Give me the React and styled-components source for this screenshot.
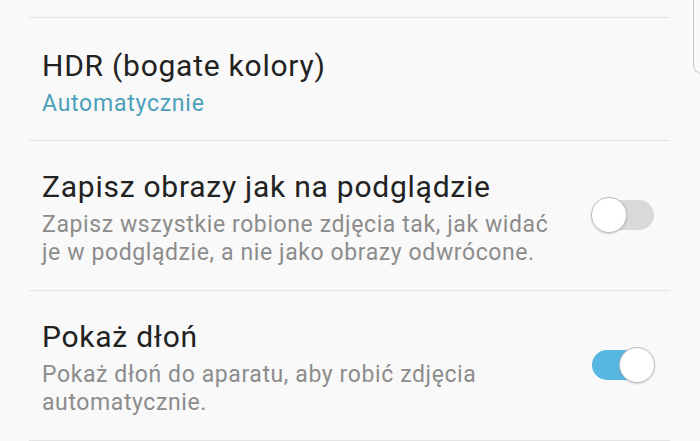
import styled, { createGlobalStyle } from "styled-components";

const GlobalStyle = createGlobalStyle`
  html, body {
    margin: 0;
    padding: 0;
    background: #f9f9f9;
  }
  body {
    font-family: Roboto, "Noto Sans", sans-serif;
    overflow: hidden;
  }
`;

const settings = [
  { title: "HDR (bogate kolory)", value: "Automatycznie" },
  {
    title: "Zapisz obrazy jak na podglądzie",
    description: [
      "Zapisz wszystkie robione zdjęcia tak, jak widać",
      "je w podglądzie, a nie jako obrazy odwrócone.",
    ],
    checked: false,
  },
  {
    title: "Pokaż dłoń",
    description: ["Pokaż dłoń do aparatu, aby robić zdjęcia", "automatycznie."],
    checked: true,
  },
];

export default function App() {
  return (
    <PageStyled>
      <GlobalStyle />
      <ScrollEdge />
      <List>
        {settings.map((item) => (
          <Row key={item.title} $first={!!item.value}>
            <div className="text">
              <Title>{item.title}</Title>
              {item.value && <Value>{item.value}</Value>}
              {item.description && (
                <Description>
                  {item.description.map((line) => (
                    <div key={line}>{line}</div>
                  ))}
                </Description>
              )}
            </div>
            {item.description && <Toggle $on={item.checked} />}
          </Row>
        ))}
      </List>
    </PageStyled>
  );
}

const PageStyled = styled.div`
  position: relative;
  width: 700px;
  height: 441px;
  background: #f9f9f9;
  overflow: hidden;
  padding-top: 17px;
  box-sizing: border-box;
`;

const ScrollEdge = styled.div`
  position: absolute;
  top: -10px;
  left: 693px;
  width: 20px;
  height: 83px;
  border-left: 1.5px solid #c9c9c9;
  border-bottom: 1.5px solid #c9c9c9;
  border-bottom-left-radius: 9px;
`;

const List = styled.div`
  margin: 0 30px 0 29px;
`;

const Row = styled.div`
  display: flex;
  align-items: center;
  justify-content: space-between;
  border-top: 1.5px solid #e4e4e4;
  padding: ${({ $first }) => ($first ? "30px 16px 22px 13px" : "28px 16px 23px 13px")};

  &:last-child {
    border-bottom: 1.5px solid #e4e4e4;
  }

  .text {
    display: flex;
    flex-direction: column;
  }
`;

const Title = styled.div`
  font-size: 30px;
  letter-spacing: 0.75px;
  line-height: 36px;
  color: #222222;
  margin-bottom: 6px;
`;

const Value = styled.div`
  font-size: 23px;
  letter-spacing: 0.75px;
  line-height: 28px;
  color: #4b9fba;
`;

const Description = styled.div`
  font-size: 23px;
  letter-spacing: 0.6px;
  line-height: 28px;
  color: #8c8c8c;
`;

const Toggle = styled.div`
  position: relative;
  width: 62px;
  height: 30px;
  border-radius: 15px;
  background: ${({ $on }) => ($on ? "#56b7e2" : "#d9d9d9")};
  margin-top: -6px;

  &::after {
    content: "";
    position: absolute;
    top: -3px;
    left: ${({ $on }) => ($on ? "27px" : "-1px")};
    width: 34px;
    height: 34px;
    border-radius: 50%;
    background: #ffffff;
    border: 1px solid #bdbdbd;
    box-shadow: 0 1px 2px rgb(0 0 0 / 15%);
  }
`;
